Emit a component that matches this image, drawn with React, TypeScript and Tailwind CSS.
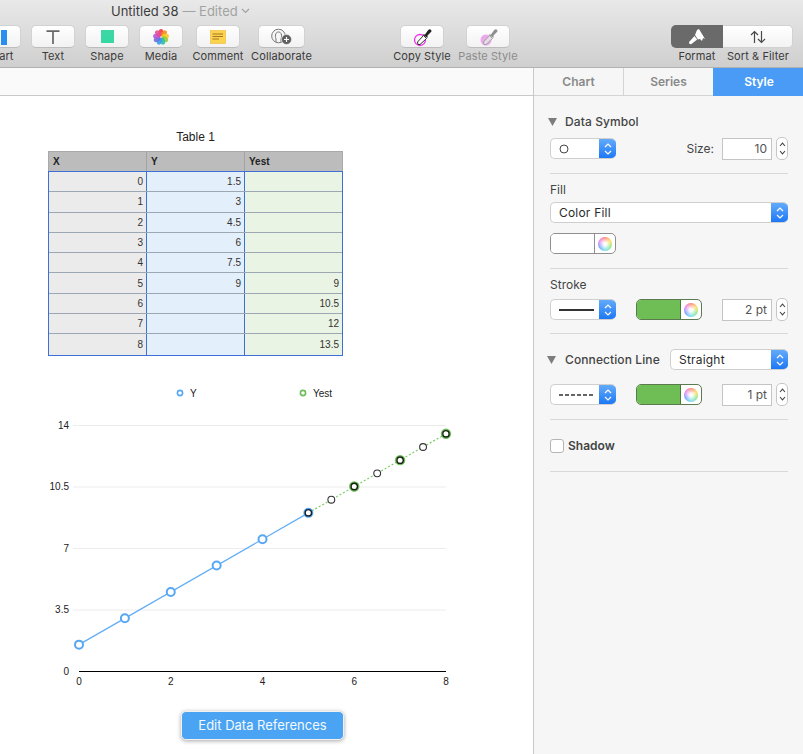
import React from "react";

function ToolItem({ label, width = "w-[44px]", className = "", labelClass = "text-[#3a3a3a]", children }: { label: string; width?: string; className?: string; labelClass?: string; children?: React.ReactNode }) {
  return (
    <div className={`flex flex-col items-center shrink-0 ${width} ${className}`}>
      <div className="w-full h-[23px] rounded-[5px] bg-gradient-to-b from-white to-[#f2f2f2] border border-[#d2d2d2] border-b-[#bcbcbc] flex items-center justify-center">
        {children}
      </div>
      <div className={`mt-[1px] text-[11px] leading-[14px] tracking-[0.1px] whitespace-nowrap ${labelClass}`}>{label}</div>
    </div>
  );
}

function Dropper({ ghost }: { ghost?: boolean }) {
  return (
    <svg width="24" height="20" viewBox="0 0 24 20">
      {ghost ? (
        <circle cx="10" cy="13" r="5.5" fill="#eba8ea" />
      ) : (
        <circle cx="10" cy="13" r="5.5" fill="none" stroke="#ee33e8" strokeWidth="1.3" />
      )}
      <path d="M7.5 15 L13.5 8.5 L16.5 11.5 L10 17.5 L8 17.5 Z" fill={ghost ? "#e8dce8" : "#fff"} stroke={ghost ? "#a0a0a0" : "#333"} strokeWidth="1" />
      <path d="M12.5 7.5 L15 7.5 L17.5 4 Q19 1.5 20.5 2.5 Q22.5 4 20.5 5.5 L17.5 8.5 L17.5 11 Z" fill={ghost ? "#8e8e8e" : "#222"} />
    </svg>
  );
}

function Flower() {
  const colors = ["#f03a3a", "#f58a1f", "#f7c925", "#8fce3a", "#2fc0a0", "#3a9bef", "#6a6de0", "#b25ad6", "#e84a9a"];
  return (
    <svg width="16" height="16" viewBox="0 0 16 16">
      {colors.map((c, i) => (
        <ellipse key={c} cx="8" cy="3.6" rx="2.5" ry="3.6" fill={c} fillOpacity="0.9" transform={`rotate(${i * 40} 8 8)`} />
      ))}
    </svg>
  );
}

function Stepper({ className = "" }: { className?: string }) {
  return (
    <div className={`w-[12px] h-[23px] rounded-[5px] bg-white border border-[#c6c6c6] flex flex-col items-center justify-center gap-[3px] shrink-0 ${className}`}>
      <svg width="7" height="5" viewBox="0 0 7 5"><path d="M1 4 L3.5 1.2 L6 4" fill="none" stroke="#444" strokeWidth="1.1" /></svg>
      <svg width="7" height="5" viewBox="0 0 7 5"><path d="M1 1 L3.5 3.8 L6 1" fill="none" stroke="#444" strokeWidth="1.1" /></svg>
    </div>
  );
}

function Select({ width, children }: { width: string; children?: React.ReactNode }) {
  return (
    <div className={`${width} h-[21px] rounded-[5px] bg-white border border-[#cfcfcf] border-r-0 flex items-stretch shrink-0 overflow-hidden`}>
      <div className="flex-1 min-w-0 flex items-center pl-[8px] text-[12px] tracking-[0.2px] text-[#2a2a2a]">{children}</div>
      <div className="w-[17px] bg-gradient-to-b from-[#62aafa] to-[#1a78f5] flex flex-col items-center justify-center gap-[2px] shrink-0">
        <svg width="8" height="5" viewBox="0 0 8 5"><path d="M1 4 L4 1 L7 4" fill="none" stroke="#fff" strokeWidth="1.2" /></svg>
        <svg width="8" height="5" viewBox="0 0 8 5"><path d="M1 1 L4 4 L7 1" fill="none" stroke="#fff" strokeWidth="1.2" /></svg>
      </div>
    </div>
  );
}

function Wheel() {
  return (
    <div className="w-[14px] h-[14px] rounded-full bg-[conic-gradient(#ff7a6a,#ffd84a,#7fe67f,#6adcec,#6a96ff,#e87af2,#ff7a6a)] flex items-center justify-center">
      <div className="w-full h-full rounded-full bg-[radial-gradient(circle,rgba(255,255,255,0.95)_15%,rgba(255,255,255,0)_75%)]" />
    </div>
  );
}

function Swatch({ color, width, dark }: { color: string; width: string; dark?: boolean }) {
  return (
    <div className={`${width} h-[21px] rounded-[5px] border ${dark ? "border-[#5b7a50]" : "border-[#8f8f8f]"} overflow-hidden flex shrink-0 bg-white`}>
      <div className={`flex-1 border-r ${dark ? "border-[#4a7a3a]" : "border-[#8f8f8f]"} ${color}`} />
      <div className="w-[20px] flex items-center justify-center"><Wheel /></div>
    </div>
  );
}

function NumberField({ text }: { text: string }) {
  return (
    <div className="w-[50px] h-[22px] bg-white border border-[#c4c4c4] flex items-center justify-end pr-[4px] text-[12px] text-[#555] shrink-0">{text}</div>
  );
}

function Triangle({ className = "" }: { className?: string }) {
  return (
    <svg width="9" height="8" viewBox="0 0 9 8" className={`shrink-0 ${className}`}><path d="M0 0 H9 L4.5 8 Z" fill="#7d7d7d" /></svg>
  );
}

function Divider({ className = "" }: { className?: string }) {
  return <div className={`h-px bg-[#d8d8d8] ${className}`} />;
}

const rows: [string, string, string][] = [
  ["0", "1.5", ""],
  ["1", "3", ""],
  ["2", "4.5", ""],
  ["3", "6", ""],
  ["4", "7.5", ""],
  ["5", "9", "9"],
  ["6", "", "10.5"],
  ["7", "", "12"],
  ["8", "", "13.5"],
];

function Table() {
  return (
    <div className="w-[295px] ml-[48px] text-[10px] text-[#333] [font-family:'Liberation_Sans',Arial,sans-serif]">
      <div className="text-center text-[12px] leading-[14px] text-[#222] mb-[7px]">Table 1</div>
      <div className="flex h-[20px] bg-[#bbbcbb] border border-[#a9a9a9] border-b-0 font-bold text-[#222] text-[10px]">
        <div className="w-[98px] pl-[4px] flex items-center border-r border-[#a3a3a3]">X</div>
        <div className="w-[98px] pl-[4px] flex items-center border-r border-[#a3a3a3]">Y</div>
        <div className="flex-1 pl-[4px] flex items-center">Yest</div>
      </div>
      <div className="border border-[#3d6fd6]">
        {rows.map((r, i) => (
          <div key={r[0]} className={`flex h-[20.3px] ${i < rows.length - 1 ? "border-b border-[#9da7b3]" : ""}`}>
            <div className="w-[98px] bg-[#ebebeb] border-r border-[#3d6fd6] flex items-center justify-end pr-[3px]">{r[0]}</div>
            <div className="w-[98px] bg-[#e3effb] border-r border-[#3d6fd6] flex items-center justify-end pr-[3px]">{r[1]}</div>
            <div className="flex-1 bg-[#eaf4e4] flex items-center justify-end pr-[3px]">{r[2]}</div>
          </div>
        ))}
      </div>
    </div>
  );
}

function Chart() {
  const X = (v: number) => 79 + 45.875 * v;
  const Y = (v: number) => 306 - 17.57 * v;
  const blue = [0, 1, 2, 3, 4, 5];
  const big = [6, 7, 8];
  const small = [5.5, 6.5, 7.5];
  const txt = { fontSize: 10, fill: "#222", fontFamily: '"Liberation Sans", Arial, sans-serif' };
  return (
    <svg width="533" height="330" viewBox="0 0 533 330" className="block mt-[9px]">
      <circle cx="180" cy="28" r="2.6" fill="#fff" stroke="#57a7f5" strokeWidth="1.6" />
      <text x="190" y="32" {...txt}>Y</text>
      <circle cx="303" cy="28" r="2.6" fill="#fff" stroke="#6cbc57" strokeWidth="1.6" />
      <text x="313" y="32" {...txt}>Yest</text>
      {[14, 10.5, 7, 3.5].map((v) => (
        <line key={v} x1="73" x2="446" y1={Y(v) + 0.5} y2={Y(v) + 0.5} stroke="#ececec" strokeWidth="1" />
      ))}
      <line x1="79" x2="446" y1="306.5" y2="306.5" stroke="#000" strokeWidth="1" />
      {[14, 10.5, 7, 3.5, 0].map((v) => (
        <text key={v} x="69" y={Y(v) + 3.5} textAnchor="end" {...txt}>{v}</text>
      ))}
      {[0, 2, 4, 6, 8].map((v) => (
        <text key={v} x={X(v)} y="320" textAnchor="middle" {...txt}>{v}</text>
      ))}
      <polyline points={`${X(0)},${Y(1.5)} ${X(5)},${Y(9)}`} fill="none" stroke="#62adf6" strokeWidth="1.2" />
      <polyline points={`${X(5)},${Y(9)} ${X(8)},${Y(13.5)}`} fill="none" stroke="#7ccf64" strokeWidth="1.2" strokeDasharray="2 2" />
      {blue.map((v) => (
        <circle key={v} cx={X(v)} cy={Y(1.5 * v + 1.5)} r="4" fill="#fff" stroke="#57a7f5" strokeWidth="2" />
      ))}
      <circle cx={X(5)} cy={Y(9)} r="3.2" fill="#fff" stroke="#16212a" strokeWidth="1.4" />
      {big.map((v) => (
        <g key={v}>
          <circle cx={X(v)} cy={Y(1.5 * v + 1.5)} r="4.4" fill="none" stroke="#6cbc57" strokeWidth="1.6" />
          <circle cx={X(v)} cy={Y(1.5 * v + 1.5)} r="3.2" fill="#fff" stroke="#16210f" strokeWidth="1.4" />
        </g>
      ))}
      {small.map((v) => (
        <circle key={v} cx={X(v)} cy={Y(1.5 * v + 1.5)} r="3.4" fill="#fff" stroke="#333" strokeWidth="1.1" />
      ))}
    </svg>
  );
}

export default function App() {
  return (
    <div className="w-[803px] h-[754px] overflow-hidden bg-white flex flex-col [font-family:Inter,'Liberation_Sans',sans-serif]">
      {/* Toolbar */}
      <div className="h-[68px] shrink-0 bg-gradient-to-b from-[#e9e9e9] to-[#cfcfcf] border-b border-[#b1b1b1]">
        <div className="h-[25px] pl-[111px] pb-[4px] text-[13px] leading-[16px] flex items-center whitespace-nowrap">
          <span className="text-[#3c3c3c]">Untitled 38</span>
          <span className="text-[#a2a2a2] ml-[4px]">— Edited</span>
          <svg width="9" height="6" viewBox="0 0 9 6" className="ml-[3px]"><path d="M1 1 L4.5 4.5 L8 1" fill="none" stroke="#a2a2a2" strokeWidth="1.2" /></svg>
        </div>
        <div className="flex items-start">
          <ToolItem label="Chart" className="-ml-[23px]">
            <svg width="30" height="16" viewBox="0 0 30 16">
              <rect x="4" y="8" width="6" height="8" fill="#f0a63a" />
              <rect x="11" y="5" width="5" height="11" fill="#3ea3ef" />
              <rect x="17" y="1" width="6" height="15" fill="#2a8df0" />
            </svg>
          </ToolItem>
          <ToolItem label="Text" className="ml-[10px]">
            <svg width="16" height="16" viewBox="0 0 16 16"><path d="M1.5 2.2 H14.5 M8 2.2 V15" stroke="#666" strokeWidth="1.7" fill="none" /></svg>
          </ToolItem>
          <ToolItem label="Shape" className="ml-[10px]">
            <div className="w-[13px] h-[13px] bg-gradient-to-b from-[#3fd6a6] to-[#34d9a0]" />
          </ToolItem>
          <ToolItem label="Media" className="ml-[10px]"><Flower /></ToolItem>
          <ToolItem label="Comment" className="ml-[13px]">
            <svg width="16" height="14" viewBox="0 0 16 14">
              <rect width="15" height="13" x="0.5" y="0.5" fill="#fbd34d" stroke="#f0b93a" strokeWidth="0.6" />
              <path d="M2.5 4 H13 M2.5 6.5 H13 M2.5 9 H9" stroke="#a5782a" strokeWidth="1" />
            </svg>
          </ToolItem>
          <ToolItem label="Collaborate" width="w-[47px]" className="ml-[18px]">
            <svg width="22" height="18" viewBox="0 0 22 18">
              <circle cx="7.5" cy="8" r="6.8" fill="#f6f6f6" stroke="#777" strokeWidth="1" />
              <path d="M5 14 V11 C3.5 7 5 4 7.5 4 C10 4 11.5 7 10 11 V14" fill="none" stroke="#777" strokeWidth="1" />
              <circle cx="15.5" cy="11.5" r="5" fill="#5e5e5e" stroke="#f6f6f6" strokeWidth="0.6" />
              <path d="M13 11.5 H18 M15.5 9 V14" stroke="#fff" strokeWidth="1.2" />
            </svg>
          </ToolItem>
          <ToolItem label="Copy Style" className="ml-[95px]"><Dropper /></ToolItem>
          <ToolItem label="Paste Style" className="ml-[22px]" labelClass="text-[#8c8c8c]"><Dropper ghost /></ToolItem>
          <div className="ml-[161px] flex items-start shrink-0">
            <div className="flex flex-col items-center w-[52px]">
              <div className="w-full h-[23px] rounded-l-[5px] bg-[#6a6a6a] flex items-center justify-center">
                <svg width="18" height="17" viewBox="0 0 18 17" fill="#fff">
                  <path d="M7 7 L9 2 L11 1 L17 11 L15 10 L14 13 L12 11 L10 11.5 Z" />
                  <path d="M6.5 8 L9.2 11.5 L3.5 16 Q2 16.5 1.2 15.5 Q0.6 14.5 1.5 13.5 Z" />
                </svg>
              </div>
              <div className="mt-[1px] text-[11px] leading-[14px] tracking-[0.1px] text-[#3a3a3a] whitespace-nowrap">Format</div>
            </div>
            <div className="flex flex-col items-center w-[70px]">
              <div className="w-full h-[23px] rounded-r-[5px] bg-gradient-to-b from-white to-[#f3f3f3] border border-l-0 border-[#d2d2d2] flex items-center justify-center">
                <svg width="16" height="14" viewBox="0 0 16 14" fill="none" stroke="#4a4a4a" strokeWidth="1.2">
                  <path d="M4.5 13 V1.5 M1 5 L4.5 1.5 L8 5" />
                  <path d="M11.5 1 V12.5 M8 9 L11.5 12.5 L15 9" />
                </svg>
              </div>
              <div className="mt-[1px] text-[11px] leading-[14px] tracking-[0.1px] text-[#3a3a3a] whitespace-nowrap">Sort &amp; Filter</div>
            </div>
          </div>
        </div>
      </div>

      <div className="flex flex-1 min-h-0">
        {/* Canvas */}
        <div className="w-[533px] shrink-0 bg-white flex flex-col">
          <div className="h-[28px] shrink-0 bg-[#fafafa] border-b border-[#c9c9c9]" />
          <div className="pt-[34px]">
            <Table />
            <Chart />
            <div className="ml-[181px] mt-[16px] w-[163px] h-[29px] pt-[1px] rounded-[5px] bg-[#4aa3f3] border border-[#f1f1f1] shadow-[0_1px_4px_rgba(0,0,0,0.35)] flex items-center justify-center text-[13px] text-[#f4f9fe]">
              Edit Data References
            </div>
          </div>
        </div>

        {/* Sidebar */}
        <div className="w-[270px] shrink-0 bg-[#f6f6f6] border-l border-[#c9c9c9] flex flex-col">
          <div className="h-[28px] shrink-0 flex text-[12px] font-semibold">
            <div className="w-[90px] flex items-center justify-center border-r border-b border-[#d4d4d4] text-[#8a8a8a]">Chart</div>
            <div className="w-[89px] flex items-center justify-center border-b border-[#d4d4d4] text-[#8a8a8a]">Series</div>
            <div className="flex-1 flex items-center justify-center bg-[#4a9bf5] text-white pl-[2px]">Style</div>
          </div>
          <div className="pl-[16px] pr-[15px] text-[12px] text-[#444]">
            <div className="mt-[18px] h-[16px] flex items-center font-medium tracking-[0.1px] -ml-[2px]">
              <Triangle className="mr-[8px]" />
              <span>Data Symbol</span>
            </div>
            <div className="mt-[7px] flex items-center">
              <Select width="w-[66px]">
                <svg width="10" height="10" viewBox="0 0 10 10"><circle cx="5" cy="5" r="4" fill="none" stroke="#444" strokeWidth="1" /></svg>
              </Select>
              <span className="ml-auto mr-[8px]">Size:</span>
              <NumberField text="10" />
              <Stepper className="ml-[4px]" />
            </div>
            <Divider className="mt-[13px]" />
            <div className="mt-[8px] h-[16px] flex items-center">Fill</div>
            <div className="mt-[4px]"><Select width="w-full"><span>Color Fill</span></Select></div>
            <div className="mt-[10px]"><Swatch width="w-[66px]" color="bg-white" /></div>
            <Divider className="mt-[14px]" />
            <div className="mt-[8px] h-[16px] flex items-center">Stroke</div>
            <div className="mt-[5px] flex items-center">
              <Select width="w-[66px]"><div className="w-[35px] h-[2px] bg-[#333]" /></Select>
              <div className="ml-[20px]"><Swatch width="w-[66px]" color="bg-[#6fbe55]" dark /></div>
              <div className="ml-auto flex items-center"><NumberField text="2 pt" /><Stepper className="ml-[4px]" /></div>
            </div>
            <Divider className="mt-[12px]" />
            <div className="mt-[15px] flex items-center">
              <Triangle className="-ml-[3px] mr-[9px]" />
              <span className="font-medium tracking-[0.1px]">Connection Line</span>
              <div className="ml-auto"><Select width="w-[118px]"><span>Straight</span></Select></div>
            </div>
            <div className="mt-[13px] flex items-center">
              <Select width="w-[66px]">
                <svg width="34" height="2" viewBox="0 0 34 2"><path d="M0 1 H34" stroke="#333" strokeWidth="1.6" strokeDasharray="4 2" /></svg>
              </Select>
              <div className="ml-[20px]"><Swatch width="w-[66px]" color="bg-[#6fbe55]" dark /></div>
              <div className="ml-auto flex items-center"><NumberField text="1 pt" /><Stepper className="ml-[4px]" /></div>
            </div>
            <Divider className="mt-[13px]" />
            <div className="mt-[17px] flex items-center">
              <div className="w-[14px] h-[14px] rounded-[3px] bg-white border border-[#b5b5b5]" />
              <span className="ml-[4px] font-semibold">Shadow</span>
            </div>
            <Divider className="mt-[16px]" />
          </div>
        </div>
      </div>
    </div>
  );
}
